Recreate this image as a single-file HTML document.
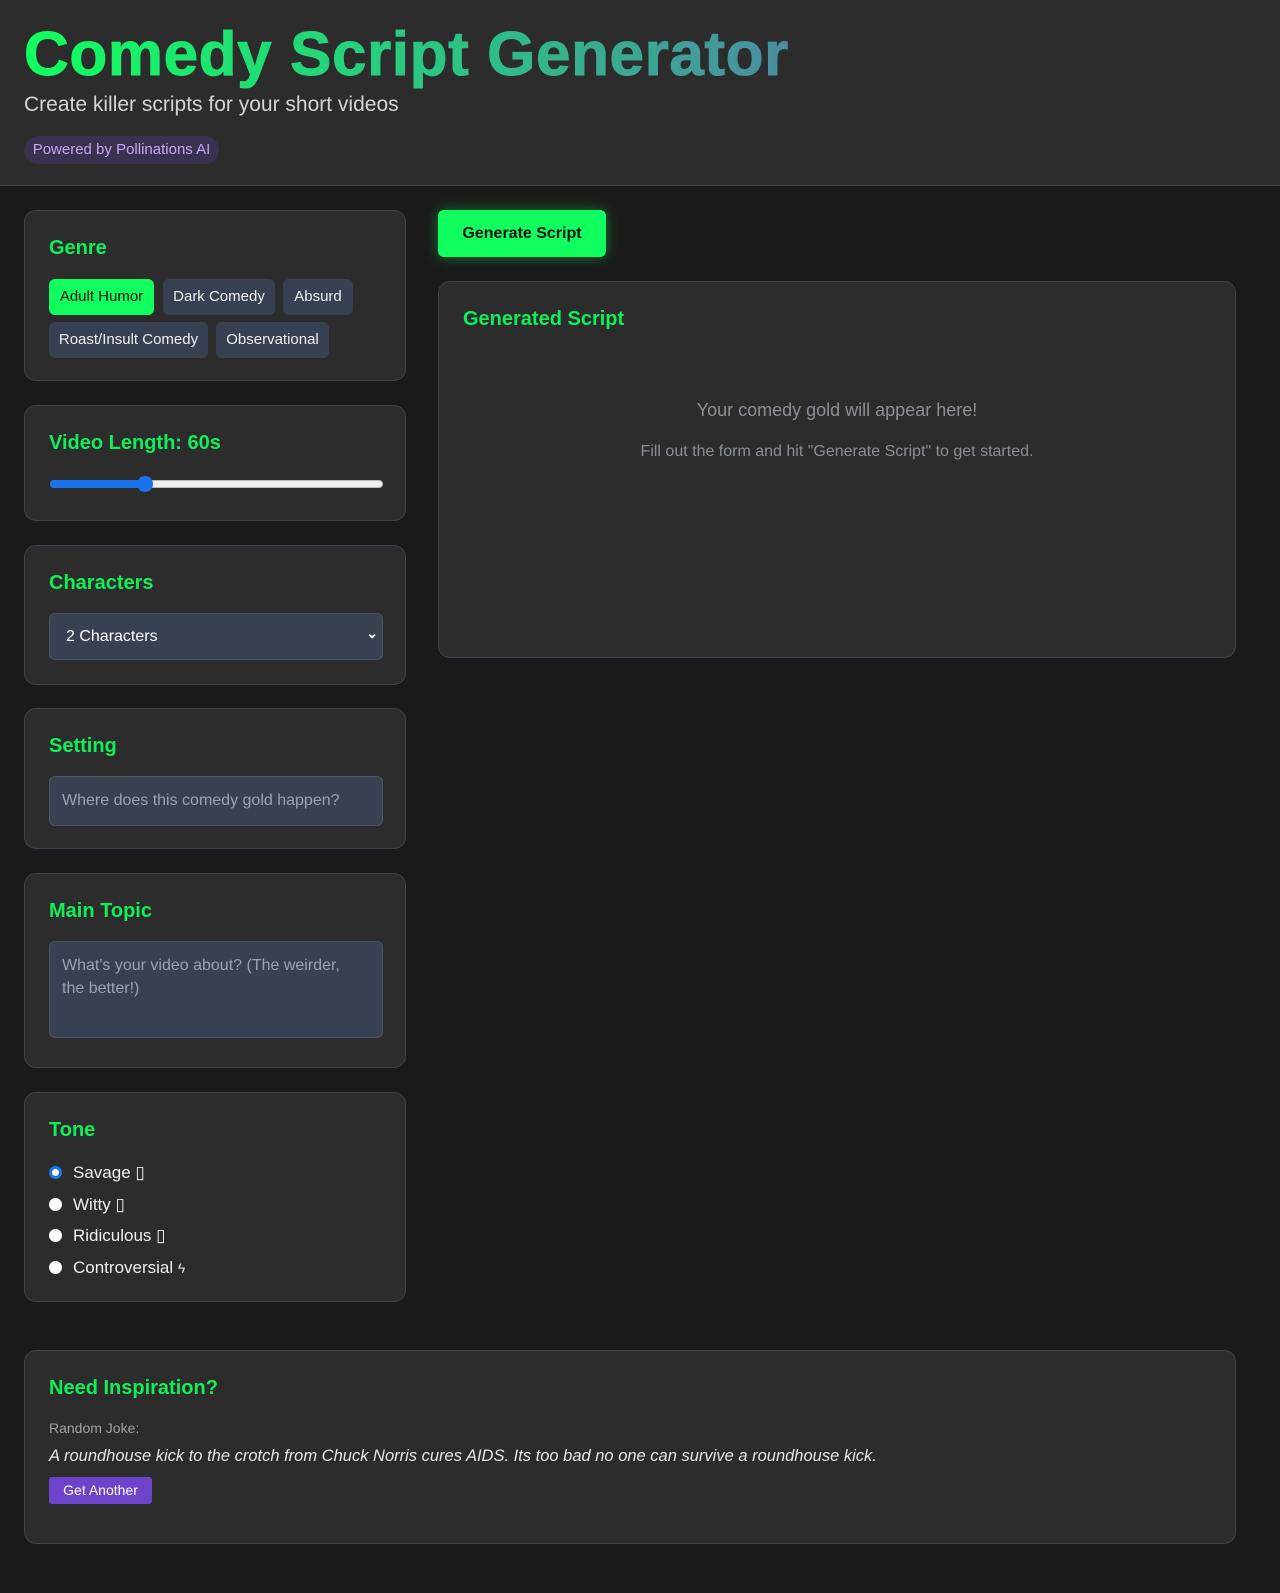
<!DOCTYPE html>
<html><head><meta charset="utf-8"><style>
*{box-sizing:border-box;margin:0;padding:0}
body{width:1280px;height:1593px;background:#1a1a1a;font-family:"Liberation Sans",sans-serif;color:#fff;position:relative;overflow:hidden}
.hdr{position:absolute;left:0;top:0;width:1280px;height:186px;background:#2c2c2c;border-bottom:1px solid #3c4250}
h1{position:absolute;left:24px;top:20px;font-size:62px;font-weight:900;letter-spacing:0.6px;background:linear-gradient(90deg,#11ff5e,#2ebf86 60%,#4a8ea0);-webkit-background-clip:text;background-clip:text;color:transparent;line-height:70px;white-space:nowrap;-webkit-text-stroke:1px transparent}
.sub{position:absolute;left:24px;top:93px;font-size:21px;color:#d4d4d8}
.pill{position:absolute;left:24px;top:136px;height:28px;width:195px;text-align:center;border-radius:14px;background:#3a3150;color:#c8a5f0;font-size:15px;line-height:28px}
.card{position:absolute;background:#2c2c2c;border:1px solid #3c4250;border-radius:12px}
.ct{position:absolute;left:24px;font-size:20px;font-weight:bold;color:#11ee5a}
.tag{position:absolute;height:36px;line-height:36px;text-align:center;border-radius:6px;background:#374151;color:#eee;font-size:15px;white-space:nowrap}
.in{position:absolute;left:24px;width:334px;background:#374151;border:1px solid #4b5563;border-radius:6px;color:#9ca3af;font-size:16px;padding:0 12px}
.rad{position:absolute;left:24px;font-size:17px;color:#eee}
.rad i{display:inline-block;width:13px;height:13px;border-radius:50%;background:#fff;vertical-align:-1px;margin-right:11px}
</style></head><body>
<div class="hdr"><h1>Comedy Script Generator</h1><div class="sub">Create killer scripts for your short videos</div><div class="pill">Powered by Pollinations AI</div></div>

<div class="card" style="left:24px;top:210px;width:382px;height:171px">
<div class="ct" style="top:26px">Genre</div>
<div class="tag" style="left:24px;top:68px;width:105px;background:#11ff5e;color:#111">Adult Humor</div>
<div class="tag" style="left:138px;top:68px;width:112px">Dark Comedy</div>
<div class="tag" style="left:258px;top:68px;width:70px">Absurd</div>
<div class="tag" style="left:24px;top:111px;width:159px">Roast/Insult Comedy</div>
<div class="tag" style="left:191px;top:111px;width:113px">Observational</div>
</div>

<div class="card" style="left:24px;top:405px;width:382px;height:116px">
<div class="ct" style="top:26px">Video Length: 60s</div>
<div style="position:absolute;left:25px;top:74px;width:333px;height:8px;border-radius:4px;background:#eee;border:1px solid #bbb"></div>
<div style="position:absolute;left:25px;top:74px;width:95px;height:8px;border-radius:4px;background:#1a73e8"></div>
<div style="position:absolute;left:112px;top:70px;width:16px;height:16px;border-radius:50%;background:#1a73e8"></div>
</div>

<div class="card" style="left:24px;top:545px;width:382px;height:140px">
<div class="ct" style="top:26px">Characters</div>
<div class="in" style="top:67px;height:47px;line-height:45px;color:#fff;padding-left:16px">2 Characters<span style="position:absolute;right:4px;top:-3px;font-size:14px;font-weight:bold">&#8964;</span></div>
</div>

<div class="card" style="left:24px;top:708px;width:382px;height:141px">
<div class="ct" style="top:26px">Setting</div>
<div class="in" style="top:67px;height:50px;line-height:48px">Where does this comedy gold happen?</div>
</div>

<div class="card" style="left:24px;top:873px;width:382px;height:195px">
<div class="ct" style="top:26px">Main Topic</div>
<div class="in" style="top:67px;height:97px;line-height:23px;padding-top:12px;padding-right:20px">What's your video about? (The weirder, the better!)</div>
</div>

<div class="card" style="left:24px;top:1092px;width:382px;height:210px">
<div class="ct" style="top:26px">Tone</div>
<div class="rad" style="top:70px"><i style="border:3px solid #1a73e8;background:#fff;box-shadow:inset 0 0 0 2px #fff"></i>Savage ▯</div>
<div class="rad" style="top:102px"><i></i>Witty ▯</div>
<div class="rad" style="top:133px"><i></i>Ridiculous ▯</div>
<div class="rad" style="top:165px"><i></i>Controversial <span style="font-size:14px;color:#ddd">ϟ</span></div>
</div>

<div style="position:absolute;left:438px;top:210px;width:168px;height:47px;border-radius:6px;background:#11ff5e;color:#111;font-weight:bold;font-size:16px;line-height:47px;text-align:center;box-shadow:0 0 14px rgba(17,255,94,.4)">Generate Script</div>

<div class="card" style="left:438px;top:281px;width:798px;height:377px">
<div class="ct" style="top:26px">Generated Script</div>
<div style="position:absolute;left:0;width:100%;top:118px;text-align:center;color:#8a8f98;font-size:18px">Your comedy gold will appear here!</div>
<div style="position:absolute;left:0;width:100%;top:161px;text-align:center;color:#8a8f98;font-size:16px">Fill out the form and hit "Generate Script" to get started.</div>
</div>

<div class="card" style="left:24px;top:1350px;width:1212px;height:194px">
<div class="ct" style="top:26px">Need Inspiration?</div>
<div style="position:absolute;left:24px;top:69px;font-size:14px;color:#a1a1aa">Random Joke:</div>
<div style="position:absolute;left:24px;top:96px;font-size:16.5px;font-style:italic;color:#e5e5e5">A roundhouse kick to the crotch from Chuck Norris cures AIDS. Its too bad no one can survive a roundhouse kick.</div>
<div style="position:absolute;left:24px;top:126px;height:27px;width:103px;text-align:center;line-height:27px;background:#6d44c9;border-radius:3px;font-size:14px">Get Another</div>
</div>
</body></html>
